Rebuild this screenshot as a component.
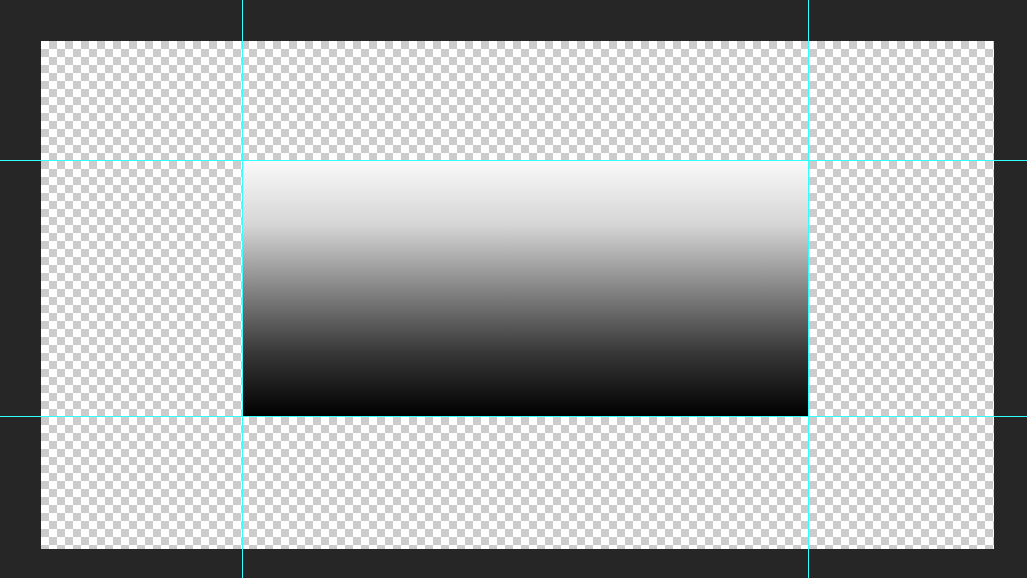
const App = () => {
    return (
        <div className="relative w-[1027px] h-[578px] overflow-hidden bg-[#262626] p-[41px] pr-[33px] pb-[29px]">
            {/* canvas */}
            <div className="w-[953px] h-[508px] bg-[conic-gradient(#cccccc_25%,#ffffff_0_50%,#cccccc_0_75%,#ffffff_0)] bg-[length:16px_16px] pt-[119px] pl-[201px]">
                <div className="w-[567px] h-[256px] bg-[linear-gradient(to_bottom,#fafafa,#d6d6d6_25%,#868686_50%,#383838_75%,#000000)]" />
            </div>

            {/* guides */}
            <div className="absolute left-0 right-0 top-[160px] h-px bg-[#33ffff]" />
            <div className="absolute left-0 right-0 top-[416px] h-px bg-[#33ffff]" />
            <div className="absolute top-0 bottom-0 left-[242px] w-px bg-[#33ffff]" />
            <div className="absolute top-0 bottom-0 left-[808px] w-px bg-[#33ffff]" />
        </div>
    )
}

export default App
